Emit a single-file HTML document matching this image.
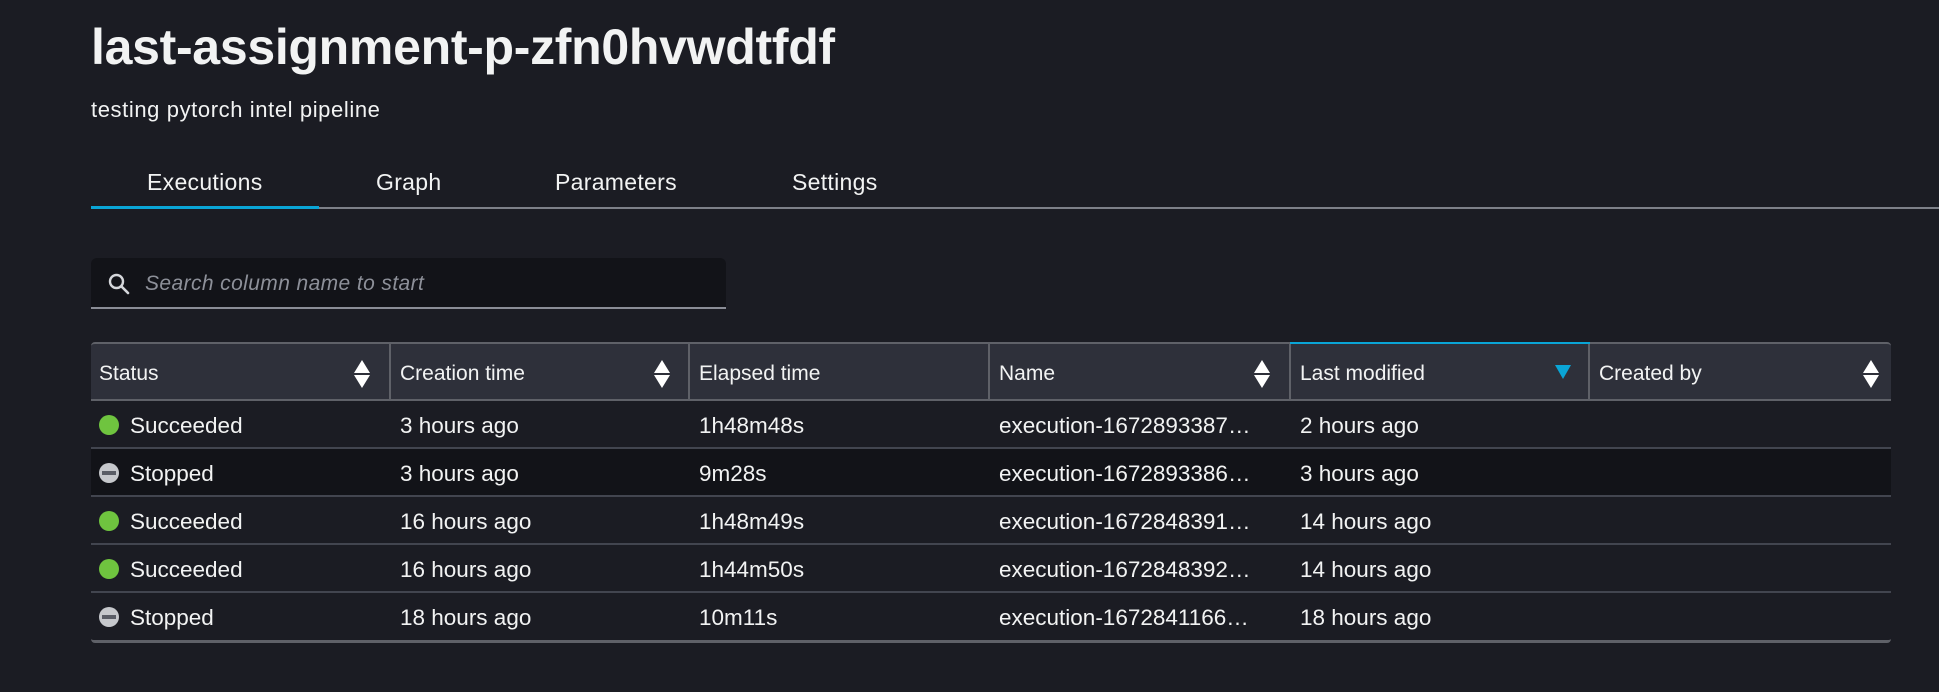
<!DOCTYPE html>
<html><head><meta charset="utf-8"><style>
*{margin:0;padding:0;box-sizing:border-box}
body{width:1939px;height:692px;background:#1b1c23;color:#f2f3f3;font-family:"Liberation Sans","DejaVu Sans",sans-serif;position:relative;overflow:hidden}
.a{position:absolute;white-space:nowrap}
.title{left:91px;top:18px;font-size:50px;font-weight:bold;letter-spacing:-0.3px}
.sub{left:91px;top:97px;font-size:22px;letter-spacing:0.6px}
.tab{top:169px;font-size:23px;letter-spacing:0.3px}
.search{left:91px;top:258px;width:635px;height:51px;background:#121318;border-radius:6px 6px 0 0;border-bottom:2px solid #8a8d96}
.search span{position:absolute;left:54px;top:14px;font-size:21px;font-style:italic;color:#8d9099;letter-spacing:0.4px}
.hdr{left:91px;top:342px;width:1800px;height:59px;background:#2e303a;border-top:2px solid #5f6168;border-bottom:2px solid #5f6168;border-radius:4px 4px 0 0}
.vl{position:absolute;top:0;width:2px;height:57px;background:#5f6168}
.ht{position:absolute;top:18px;font-size:21px}
.row{left:91px;width:1800px;height:48px;border-bottom:2px solid #42454f}
.row div{position:absolute;top:12px;font-size:22.5px}
.sort{position:absolute;top:15px}
</style></head><body>
<div class="a title">last-assignment-p-zfn0hvwdtfdf</div>
<div class="a sub">testing pytorch intel pipeline</div>
<div class="a tab" style="left:147px">Executions</div>
<div class="a tab" style="left:376px">Graph</div>
<div class="a tab" style="left:555px">Parameters</div>
<div class="a tab" style="left:792px">Settings</div>
<div class="a" style="left:91px;top:207px;width:1848px;height:2px;background:#7d8088"></div>
<div class="a" style="left:91px;top:206px;width:228px;height:3px;background:#0aa5d6"></div>
<div class="a search"><svg style="position:absolute;left:16px;top:14px" width="24" height="24" viewBox="0 0 24 24"><circle cx="9.5" cy="9.5" r="6.5" fill="none" stroke="#d5d7db" stroke-width="2.4"/><path d="M14.5 14.5L21 21" stroke="#d5d7db" stroke-width="2.6" stroke-linecap="round"/></svg><span>Search column name to start</span></div>
<div class="a hdr">
<div class="ht" style="left:8px">Status</div>
<div class="vl" style="left:298px"></div><div class="ht" style="left:309px">Creation time</div>
<div class="vl" style="left:597px"></div><div class="ht" style="left:608px">Elapsed time</div>
<div class="vl" style="left:897px"></div><div class="ht" style="left:908px">Name</div>
<div class="vl" style="left:1198px"></div><div class="ht" style="left:1209px">Last modified</div>
<div style="position:absolute;left:1199px;top:-2px;width:300px;height:2px;background:#0aa5d6"></div>
<div class="vl" style="left:1497px"></div><div class="ht" style="left:1508px">Created by</div>
<svg class="sort" style="left:262px" width="18" height="30" viewBox="0 0 18 30"><path d="M9 1L17 14H1Z M1 16H17L9 29Z" fill="#fff"/></svg>
<svg class="sort" style="left:562px" width="18" height="30" viewBox="0 0 18 30"><path d="M9 1L17 14H1Z M1 16H17L9 29Z" fill="#fff"/></svg>
<svg class="sort" style="left:1162px" width="18" height="30" viewBox="0 0 18 30"><path d="M9 1L17 14H1Z M1 16H17L9 29Z" fill="#fff"/></svg>
<svg class="sort" style="left:1463px;top:20px" width="18" height="16" viewBox="0 0 18 16"><path d="M1 1H17L9 15Z" fill="#0aa5d6"/></svg>
<svg class="sort" style="left:1771px" width="18" height="30" viewBox="0 0 18 30"><path d="M9 1L17 14H1Z M1 16H17L9 29Z" fill="#fff"/></svg>
</div>
<div class="a row" style="top:401px;background:#1b1c23">
<svg style="position:absolute;left:8px;top:14px" width="20" height="20"><circle cx="10" cy="10" r="10" fill="#6fc43f"/></svg>
<div style="left:39px">Succeeded</div><div style="left:309px">3 hours ago</div><div style="left:608px">1h48m48s</div><div style="left:908px">execution-1672893387…</div><div style="left:1209px">2 hours ago</div></div>
<div class="a row" style="top:449px;background:#121318">
<svg style="position:absolute;left:8px;top:14px" width="20" height="20"><circle cx="10" cy="10" r="10" fill="#c6c8cc"/><rect x="3" y="8" width="14" height="4" fill="#5a5d66"/></svg>
<div style="left:39px">Stopped</div><div style="left:309px">3 hours ago</div><div style="left:608px">9m28s</div><div style="left:908px">execution-1672893386…</div><div style="left:1209px">3 hours ago</div></div>
<div class="a row" style="top:497px;background:#1b1c23">
<svg style="position:absolute;left:8px;top:14px" width="20" height="20"><circle cx="10" cy="10" r="10" fill="#6fc43f"/></svg>
<div style="left:39px">Succeeded</div><div style="left:309px">16 hours ago</div><div style="left:608px">1h48m49s</div><div style="left:908px">execution-1672848391…</div><div style="left:1209px">14 hours ago</div></div>
<div class="a row" style="top:545px;background:#1b1c23">
<svg style="position:absolute;left:8px;top:14px" width="20" height="20"><circle cx="10" cy="10" r="10" fill="#6fc43f"/></svg>
<div style="left:39px">Succeeded</div><div style="left:309px">16 hours ago</div><div style="left:608px">1h44m50s</div><div style="left:908px">execution-1672848392…</div><div style="left:1209px">14 hours ago</div></div>
<div class="a row" style="top:593px;background:#1b1c23;border-bottom:3px solid #5f6168;border-radius:0 0 4px 4px;height:50px">
<svg style="position:absolute;left:8px;top:14px" width="20" height="20"><circle cx="10" cy="10" r="10" fill="#c6c8cc"/><rect x="3" y="8" width="14" height="4" fill="#5a5d66"/></svg>
<div style="left:39px">Stopped</div><div style="left:309px">18 hours ago</div><div style="left:608px">10m11s</div><div style="left:908px">execution-1672841166…</div><div style="left:1209px">18 hours ago</div></div>
</body></html>
